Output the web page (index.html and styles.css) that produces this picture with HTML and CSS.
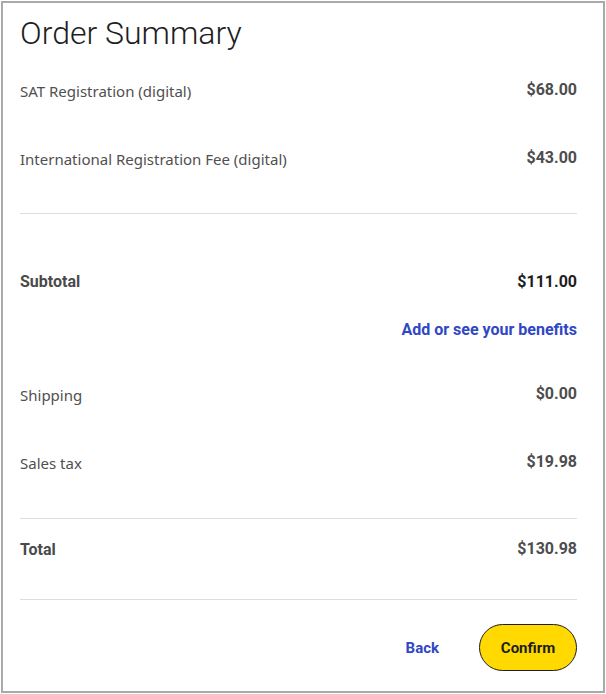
FILE: index.html
```html
<!DOCTYPE html>
<html lang="en">

<head>
    <meta charset="UTF-8">
    <meta name="viewport" content="width=device-width, initial-scale=1.0">
    <title>Order Summary</title>
    <link rel="stylesheet" href="styles.css">
</head>

<body>
    <div class="summary">
        <h1 class="title">Order Summary</h1>

        <div class="row">
            <span class="label">SAT Registration (digital)</span>
            <span class="amount">$68.00</span>
        </div>
        <div class="row">
            <span class="label">International Registration Fee (digital)</span>
            <span class="amount">$43.00</span>
        </div>

        <hr class="divider first">

        <div class="row subtotal">
            <span class="label strong">Subtotal</span>
            <span class="amount dark">$111.00</span>
        </div>
        <div class="benefits">
            <a href="#" class="link">Add or see your benefits</a>
        </div>

        <div class="row shipping">
            <span class="label">Shipping</span>
            <span class="amount">$0.00</span>
        </div>
        <div class="row">
            <span class="label">Sales tax</span>
            <span class="amount">$19.98</span>
        </div>

        <hr class="divider">

        <div class="row total">
            <span class="label strong">Total</span>
            <span class="amount">$130.98</span>
        </div>

        <hr class="divider bottom">

        <div class="actions">
            <button class="btn-back">Back</button>
            <button class="btn-confirm">Confirm</button>
        </div>
    </div>
</body>

</html>
```

FILE: styles.css
```css
body {
    margin: 1px;
    background-color: #fff;
    font-family: "Noto Sans", "Open Sans", sans-serif;
}

.summary {
    box-sizing: border-box;
    width: 604px;
    height: 692px;
    border: 2px solid #aaaaaa;
    padding: 10px 26px 0 17px;
}

.title {
    margin: 0 0 3px;
    font-family: Roboto, sans-serif;
    font-weight: 300;
    font-size: 32px;
    line-height: 40px;
    color: #1e1e1e;
}

.row {
    display: flex;
    justify-content: space-between;
    align-items: center;
    padding: 24px 0;
    line-height: 20px;
}

.label {
    font-size: 15px;
    color: #505050;
    position: relative;
    top: 1px;
}

.label.strong {
    font-family: Roboto, sans-serif;
    font-weight: 700;
    font-size: 16px;
    color: #4a4a4a;
    top: 1px;
}

.amount {
    font-family: Roboto, sans-serif;
    font-weight: 700;
    font-size: 16px;
    color: #4d4d4d;
}

.amount.dark {
    color: #1e1e1e;
    position: relative;
    top: 1px;
}

.divider {
    margin: 22px 0 0;
    border: none;
    border-top: 1px solid #dddddd;
}

.divider.first {
    margin-top: 21px;
}

.divider.bottom {
    margin-top: 20px;
}

.subtotal {
    margin-top: 33px;
}

.benefits {
    margin-top: 4px;
    text-align: right;
    line-height: 20px;
}

.link {
    font-family: Roboto, sans-serif;
    font-weight: 700;
    font-size: 16px;
    color: #3047c4;
    text-decoration: none;
}

.shipping {
    margin-top: 20px;
}

.total {
    padding: 20px 0;
}

.actions {
    display: flex;
    justify-content: flex-end;
    align-items: center;
    gap: 24px;
    margin-top: 24px;
}

.btn-back,
.btn-confirm {
    font-family: Roboto, sans-serif;
    font-weight: 700;
    font-size: 15px;
    cursor: pointer;
}

.btn-back {
    padding: 0 16px;
    background: none;
    border: none;
    color: #3047c4;
}

.btn-confirm {
    width: 98px;
    height: 47px;
    background-color: #ffd900;
    border: 1px solid #1e1e1e;
    border-radius: 24px;
    color: #1e1e1e;
}
```
